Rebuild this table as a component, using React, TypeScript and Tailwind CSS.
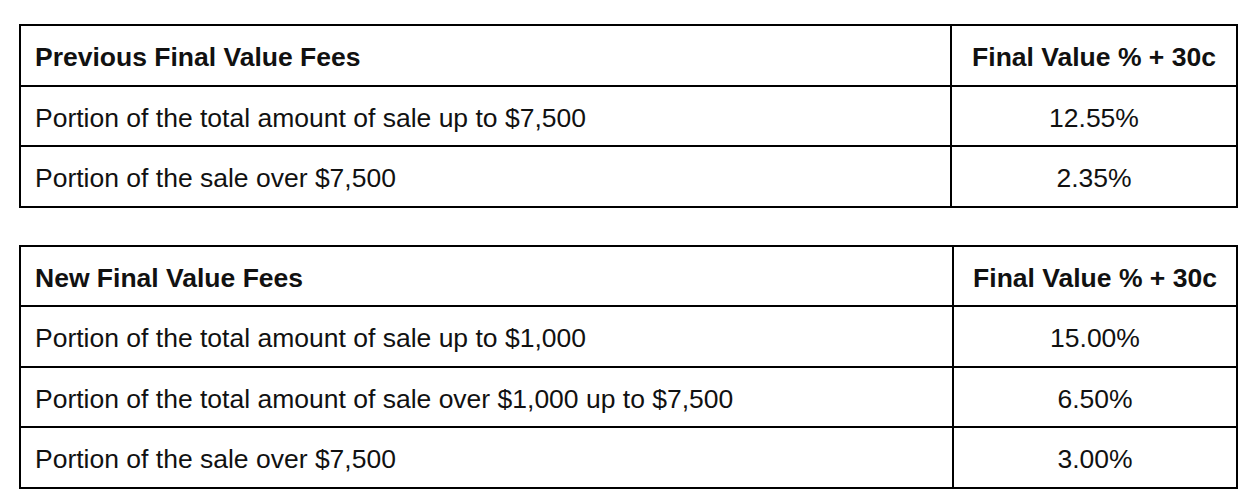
const previousRows = [
  ["Portion of the total amount of sale up to $7,500", "12.55%"],
  ["Portion of the sale over $7,500", "2.35%"],
];

const newRows = [
  ["Portion of the total amount of sale up to $1,000", "15.00%"],
  ["Portion of the total amount of sale over $1,000 up to $7,500", "6.50%"],
  ["Portion of the sale over $7,500", "3.00%"],
];

function FeeTable({ title, rows, leftWidth }: { title: string; rows: string[][]; leftWidth: string }) {
  return (
    <table className="w-[1219px] border-collapse border-2 border-black table-fixed">
      <colgroup>
        <col className={leftWidth} />
        <col />
      </colgroup>
      <thead>
        <tr className="h-[60.5px]">
          <th className="border-2 border-black pl-[14px] pt-[6px] text-left font-bold">{title}</th>
          <th className="border-2 border-black pt-[6px] text-center font-bold">Final Value % + 30c</th>
        </tr>
      </thead>
      <tbody>
        {rows.map(([label, value]) => (
          <tr key={label} className="h-[60.5px]">
            <td className="border-2 border-black pl-[14px] pt-[6px]">{label}</td>
            <td className="border-2 border-black pt-[6px] text-center">{value}</td>
          </tr>
        ))}
      </tbody>
    </table>
  );
}

export default function App() {
  return (
    <div className="min-h-screen bg-white pl-[19px] pt-[24px] text-[26.5px] text-[#111] font-['Liberation_Sans',Arial,sans-serif]">
      <FeeTable title="Previous Final Value Fees" rows={previousRows} leftWidth="w-[931px]" />
      <div className="h-[37px]" />
      <FeeTable title="New Final Value Fees" rows={newRows} leftWidth="w-[933px]" />
    </div>
  );
}
